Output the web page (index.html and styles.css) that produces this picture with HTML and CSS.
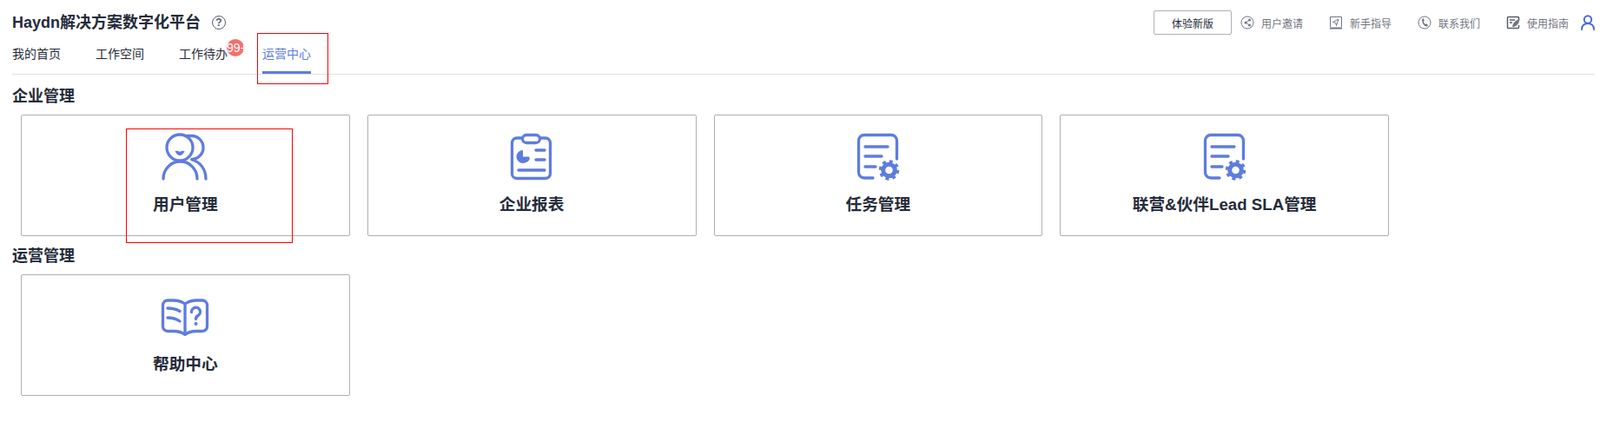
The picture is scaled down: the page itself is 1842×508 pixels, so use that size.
FILE: index.html
```html
<!DOCTYPE html>
<html lang="zh-CN">
<head>
<meta charset="utf-8">
<title>运营中心</title>
<link rel="stylesheet" href="styles.css">
</head>
<body>
<svg class="defs" width="0" height="0" aria-hidden="true">
  <symbol id="doc-gear" viewBox="0 0 60 60">
    <path class="st" d="M51.5 32V11A6.5 6.5 0 0 0 45 4.500H14A6.500 6.500 0 0 0 7.500 11V47.500A6.500 6.500 0 0 0 14 54H24"/>
    <path class="st" d="M15 18H41M15 29H34M15 41H27"/>
    <circle class="gear-ring" cx="42.500" cy="45" r="6.800"/>
    <circle class="gear-teeth" cx="42.500" cy="45" r="10"/>
  </symbol>
</svg>

<header class="top">
  <div class="brand">
    <h1 class="title">Haydn解决方案数字化平台</h1>
    <span class="help">?</span>
  </div>
  <div class="tools">
    <button class="try">体验新版</button>
    <a class="tool">
      <svg class="ti" viewBox="0 0 16 16"><circle class="thin" cx="8" cy="8" r="7"/><path class="thin" d="M10.500 5 6 8l4.500 3"/><circle class="dot" cx="10.500" cy="5" r="1.500"/><circle class="dot" cx="6" cy="8" r="1.500"/><circle class="dot" cx="10.500" cy="11" r="1.500"/></svg>
      <span>用户邀请</span>
    </a>
    <a class="tool">
      <svg class="ti" viewBox="0 0 16 16"><path class="thin" d="M1.500 13V1.500H14.500V13"/><path class="thick" d="M1 14.500H15"/><path class="thin" d="M11 4 4.500 7.500 7.800 8.500 8.500 11.500Z"/></svg>
      <span>新手指导</span>
    </a>
    <a class="tool">
      <svg class="ti" viewBox="0 0 16 16"><circle class="thin" cx="8" cy="8" r="7"/><path class="dot" d="M5.500 3.500 7 3.200 7.800 5.800 6.800 6.800C7 8 8 9.400 9 10L10.300 9.200 12 11 11 12.500C7.500 12.800 4 7.500 5.500 3.500Z"/></svg>
      <span>联系我们</span>
    </a>
    <a class="tool">
      <svg class="ti" viewBox="0 0 16 16"><path class="mid" d="M14.500 5V2.500A1 1 0 0 0 13.500 1.500H2.500A1 1 0 0 0 1.500 2.500V13.500A1 1 0 0 0 2.500 14.500H13.500A1 1 0 0 0 14.500 13.500V11"/><path class="mid" d="M4 5H10M4 8H7"/><path class="dot" d="M15.500 4.500C11 5 8 8 7 12.500L8 13C11.500 12.500 14.500 10 15.500 4.500Z"/></svg>
      <span>使用指南</span>
    </a>
    <svg class="me" viewBox="0 0 16 18"><circle cx="8" cy="5.500" r="4.200"/><path d="M1 17C1 12.500 4 10 8 10S15 12.500 15 17"/></svg>
  </div>
</header>

<nav class="tabs">
  <a class="tab">我的首页</a>
  <a class="tab">工作空间</a>
  <a class="tab has-badge">工作待办<span class="badge">99+</span></a>
  <a class="tab active">运营中心</a>
</nav>

<main class="content">
  <section class="group">
    <h2 class="heading">企业管理</h2>
    <div class="cards">
      <div class="card">
        <svg class="icon" viewBox="0 0 60 60">
          <circle class="st" cx="24" cy="19" r="15"/>
          <path class="st" d="M32 5.500H37A13.500 13.500 0 0 1 38 32.500"/>
          <path class="st" d="M5 55A19.500 20 0 0 1 44 55"/>
          <path class="st" d="M38 33C47 35 54 44 54 55"/>
          <path class="fl" d="M18.500 23Q21.500 22 24 24Q26.500 22 29.500 23Q27.500 28 24 28Q20.500 28 18.500 23Z"/>
        </svg>
        <div class="label">用户管理</div>
      </div>
      <div class="card">
        <svg class="icon" viewBox="0 0 60 60">
          <path class="st" d="M19 8H13A5.500 5.500 0 0 0 7.500 13.500V49A5.500 5.500 0 0 0 13 54.500H46A5.500 5.500 0 0 0 51.500 49V13.500A5.500 5.500 0 0 0 46 8H40"/>
          <rect class="st" x="19.500" y="4.500" width="20" height="9" rx="4.500"/>
          <path class="fl" d="M20 22A7.500 7.500 0 1 0 27.500 29.500H20Z"/>
          <path class="fl" d="M22 31H28A6 6 0 0 1 22 36Z"/>
          <path class="st" d="M35 22H45M35 33H45M15 45H45"/>
        </svg>
        <div class="label">企业报表</div>
      </div>
      <div class="card">
        <svg class="icon"><use href="#doc-gear"/></svg>
        <div class="label">任务管理</div>
      </div>
      <div class="card">
        <svg class="icon"><use href="#doc-gear"/></svg>
        <div class="label">联营&amp;伙伴Lead SLA管理</div>
      </div>
    </div>
  </section>
  <section class="group">
    <h2 class="heading">运营管理</h2>
    <div class="cards">
      <div class="card">
        <svg class="icon" viewBox="0 0 60 60">
          <path class="st" d="M30 15Q24 11 17 11H10A5.500 5.500 0 0 0 4.500 16.500V41A5.500 5.500 0 0 0 10 46.500H17Q25 46.500 30 50.500Q35 46.500 43 46.500H50A5.500 5.500 0 0 0 55.500 41V16.500A5.500 5.500 0 0 0 50 11H43Q36 11 30 15V50"/>
          <path class="st" d="M10 20Q18 20 24 23.500M10 31Q18 31 24 35"/>
          <path class="st" d="M37.500 24.500A5 5 0 1 1 45 28.500C43 29.700 42.500 30.500 42.500 32.500"/>
          <circle class="fl" cx="42.500" cy="38" r="2"/>
        </svg>
        <div class="label">帮助中心</div>
      </div>
    </div>
  </section>
</main>

<div class="mark mark-tab"></div>
<div class="mark mark-card"></div>
</body>
</html>
```

FILE: styles.css
```css
* { box-sizing: border-box; }
html, body { margin: 0; padding: 0; }
body {
  position: relative;
  height: 508px;
  overflow: hidden;
  background: #fff;
  color: #252b3a;
  font-family: "Liberation Sans", "Noto Sans CJK SC", sans-serif;
  font-size: 14px;
}
.defs { position: absolute; }

.top {
  display: flex;
  justify-content: space-between;
  align-items: center;
  height: 40px;
  padding: 12px 6px 0 14px;
}
.brand { display: flex; align-items: center; }
.title { margin: 0; font-size: 18px; line-height: 28px; font-weight: 700; }
.help {
  display: flex;
  align-items: center;
  justify-content: center;
  width: 16px;
  height: 16px;
  margin-left: 13px;
  border: 1.500px solid #575d6c;
  border-radius: 50%;
  color: #575d6c;
  font-size: 12px;
  font-weight: 700;
  line-height: 1;
}
.tools { display: flex; align-items: center; height: 28px; }
.try {
  width: 90px;
  height: 28px;
  margin-right: 10px;
  padding: 0;
  border: 1px solid #adb0b8;
  border-radius: 2px;
  background: #fff;
  color: #252b3a;
  font: inherit;
  font-size: 12px;
}
.tool {
  display: flex;
  align-items: center;
  gap: 8px;
  margin-right: 30px;
  color: #71757f;
  font-size: 12px;
}
.tool:last-of-type { margin-right: 14px; }
.ti { width: 16px; height: 16px; flex: none; }
.thin { fill: none; stroke: #71757f; stroke-width: 1; }
.mid { fill: none; stroke: #575d6c; stroke-width: 1.500; }
.thick { fill: none; stroke: #71757f; stroke-width: 2; }
.dot { fill: #71757f; }
.me {
  width: 16px;
  height: 18px;
  flex: none;
  fill: none;
  stroke: #4a6bd6;
  stroke-width: 2;
  stroke-linecap: round;
}

.tabs {
  display: flex;
  gap: 40px;
  height: 46px;
  margin: 0 6px 0 14px;
  border-bottom: 1px solid #dfe1e6;
}
.tab {
  position: relative;
  height: 45px;
  padding-top: 12px;
  line-height: 20px;
  color: #252b3a;
}
.tab.active {
  border-bottom: 3px solid #5e7ce0;
  color: #5e7ce0;
}
.badge {
  position: absolute;
  top: 5px;
  left: 55px;
  width: 20px;
  height: 20px;
  border-radius: 50%;
  background: #f66f6a;
  color: #fff;
  font-size: 14px;
  line-height: 20px;
  text-align: center;
  white-space: nowrap;
}

.content { padding: 13px 0 0 14px; }
.group + .group { margin-top: 11px; }
.heading {
  margin: 0 0 9px;
  font-size: 18px;
  line-height: 24px;
  font-weight: 700;
}
.cards { display: flex; gap: 20px; padding-left: 10px; }
.card {
  display: flex;
  flex-direction: column;
  align-items: center;
  width: 378.750px;
  height: 140px;
  padding-top: 18px;
  border: 1px solid #adb0b8;
  border-radius: 2px;
}
.icon { display: block; width: 60px; height: 60px; flex: none; }
.st { fill: none; stroke: #5e7ce0; stroke-width: 3.300; stroke-linecap: round; stroke-linejoin: round; }
.fl { fill: #5e7ce0; }
.gear-ring { fill: none; stroke: #5e7ce0; stroke-width: 5; }
.gear-teeth { fill: none; stroke: #5e7ce0; stroke-width: 3.500; stroke-dasharray: 3.850 4; }
.label {
  margin-top: 12px;
  font-size: 18.700px;
  line-height: 26px;
  font-weight: 700;
  white-space: nowrap;
}

.mark { position: absolute; border: 1px solid #f00; }
.mark-tab { left: 296px; top: 38px; width: 82px; height: 59px; }
.mark-card { left: 145px; top: 148px; width: 192px; height: 132px; }
```
